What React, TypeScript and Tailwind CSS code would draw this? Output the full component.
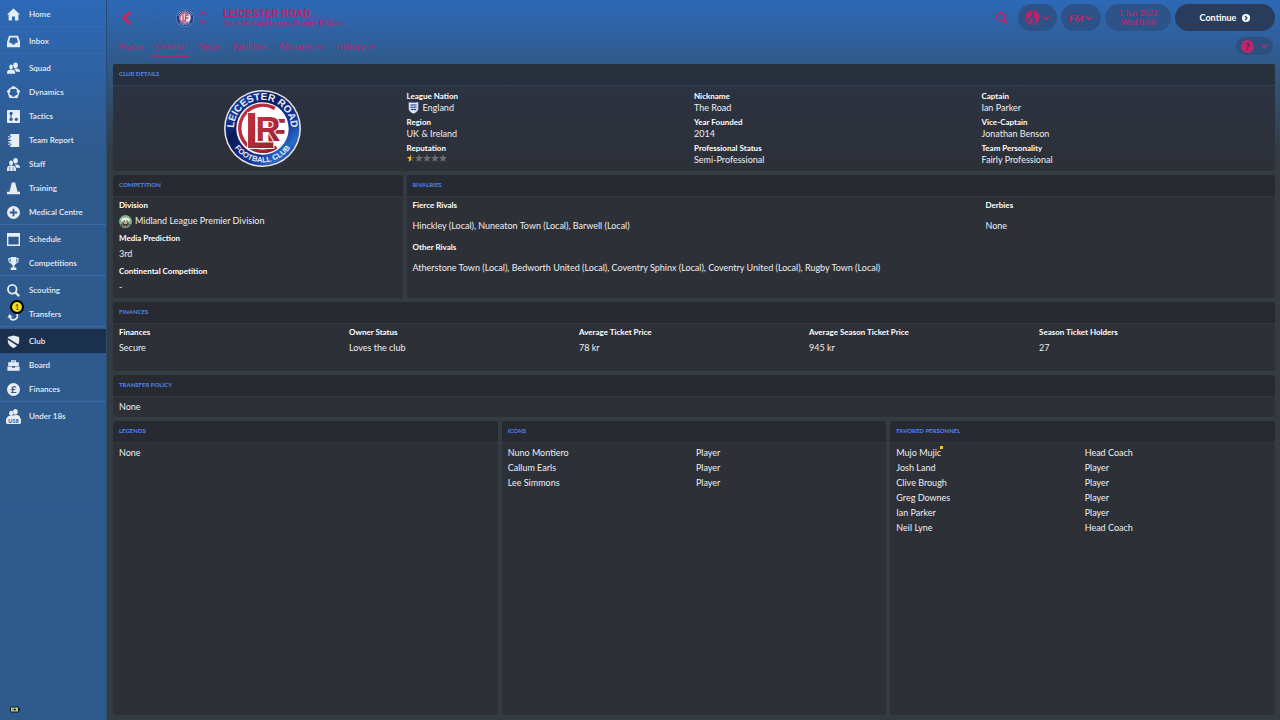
import React from "react";
import clsx from "clsx";

type IconProperties = {
  className?: string;
  children?: React.ReactNode;
};

const Glyph: React.FC<IconProperties> = ({ className, children }) => (
  <svg
    viewBox="0 0 16 16"
    fill="currentColor"
    aria-hidden="true"
    className={className || "size-[13px] shrink-0"}
  >
    {children}
  </svg>
);

const HomeIcon = () => (
  <Glyph>
    <path d="M8 0.5 16 8h-2v7.5H9.8v-5H6.2v5H2V8H0l8-7.5z" />
  </Glyph>
);

const InboxIcon = () => (
  <Glyph>
    <path
      fillRule="evenodd"
      d="M2.5 1h11L16 8.5V15H0V8.500L2.500 1zm1.600 2.200L2.600 8.500v1h2.600l1.300 2.300h3l1.300-2.300h2.600v-1l-1.500-5.300H4.100z"
    />
  </Glyph>
);

const SquadIcon = () => (
  <Glyph>
    <ellipse cx="10.500" cy="4" rx="2.800" ry="3.500" />
    <ellipse cx="5" cy="6" rx="2.300" ry="2.900" />
    <path d="M8.500 8.300 12.300 8c2.200.8 3.700 1.500 3.700 3.200V12h-5c-.3-1.700-1.200-2.600-2.500-3.700z" />
    <path d="M0 12.800c0-2.300 2-3.500 5-3.500s5 1.200 5 3.500v1.700H0v-1.700z" />
  </Glyph>
);

const DynamicsIcon = () => (
  <Glyph>
    <circle cx="8" cy="8" r="6.200" fill="none" stroke="currentColor" strokeWidth="1.800" />
    <circle cx="8" cy="2" r="2" />
    <circle cx="13.900" cy="6.500" r="2" />
    <circle cx="11.700" cy="13" r="2" />
    <circle cx="4.300" cy="13" r="2" />
    <circle cx="2.100" cy="6.500" r="2" />
  </Glyph>
);

const TacticsIcon = () => (
  <Glyph>
    <rect width="16" height="16" rx="1" />
    <g fill="#2f5f9c">
      <circle cx="5" cy="4.300" r="2" />
      <circle cx="5" cy="11.500" r="2" />
      <circle cx="11.500" cy="11.500" r="2" />
      <rect x="4.300" y="5.500" width="1.400" height="5" />
    </g>
  </Glyph>
);

const ReportIcon = () => (
  <Glyph>
    <path d="M4 0h11v16H4v-2.500H1.500V12H4v-1.500H1.500V9H4V7H1.500V5.500H4V4H1.500V2.500H4V0z" />
    <path d="M5.500 3.200H3M5.500 8H3M5.500 12.800H3" stroke="#2f5f9c" strokeWidth="1" />
  </Glyph>
);

const StaffIcon = () => (
  <Glyph>
    <ellipse cx="10.500" cy="3.500" rx="2.800" ry="3.400" />
    <ellipse cx="5" cy="6" rx="2.400" ry="2.900" />
    <path d="M9 8h3.500c2 .7 3.500 1.500 3.500 3.200V12h-4.500C11 10 10 9 9 8z" />
    <path d="M0 13.500c0-3 2-4.200 5-4.200s6 1.200 6 4.200V16H0v-2.500z" />
    <path d="M3.300 11v5M7.500 11v5" stroke="#2f5b92" strokeWidth="0.800" />
  </Glyph>
);

const TrainingIcon = () => (
  <Glyph>
    <path d="M6 0.500h4l3 11.500h3v3H0v-3h3L6 0.500z" />
  </Glyph>
);

const MedicalIcon = () => (
  <Glyph>
    <path
      fillRule="evenodd"
      d="M8 0a8 8 0 1 1 0 16A8 8 0 0 1 8 0zM6.900 3.500v3.400H3.500v2.200h3.400v3.400h2.200V9.100h3.400V6.900H9.100V3.500H6.900z"
    />
  </Glyph>
);

const ScheduleIcon = () => (
  <Glyph>
    <path fillRule="evenodd" d="M0 0h16v16H0V0zm1.700 4.500v9.800h12.600V4.500H1.700z" />
  </Glyph>
);

const TrophyIcon = () => (
  <Glyph>
    <path d="M4.500 0h7v5c0 3-1.200 4.800-2.500 5.500V13h2.500v3h-7v-3H7v-2.500C5.700 9.800 4.500 8 4.500 5V0z" />
    <path
      d="M4.500 2H2.200c0 3 .8 5 3.300 5.500M11.500 2h2.300c0 3-.8 5-3.300 5.500"
      fill="none"
      stroke="currentColor"
      strokeWidth="1.300"
    />
  </Glyph>
);

const SearchIcon: React.FC<IconProperties> = ({ className }) => (
  <Glyph className={className}>
    <circle cx="6.500" cy="6.500" r="5.300" fill="none" stroke="currentColor" strokeWidth="2.200" />
    <path d="M10.500 10.500 15 15" stroke="currentColor" strokeWidth="2.800" />
  </Glyph>
);

const TransfersIcon = () => (
  <Glyph>
    <path
      d="M12.500 7c1.500 4.500-1 7.500-4.500 7.500-2.500 0-4-1.500-4.500-3.500"
      fill="none"
      stroke="currentColor"
      strokeWidth="2.200"
    />
    <path d="M0.500 12 3 7.500l4 3.500-6.500 1z" />
  </Glyph>
);

const ClubIcon = () => (
  <Glyph>
    <path d="M1 2.500 8 0.500l7 2v5c0 4-3 7-7 8.500-4-1.500-7-4.500-7-8.500v-5z" />
    <path d="M0.500 4.500 14 13" stroke="#1b304d" strokeWidth="2" />
  </Glyph>
);

const BoardIcon = () => (
  <Glyph>
    <path
      fillRule="evenodd"
      d="M5 1.500h6V4h3.500v4.500h-13V4H5V1.500zM6.500 3v1h3V3h-3z"
    />
    <path d="M0.500 9.300h5.800v1.500h3.400V9.300h5.800v5.200H0.500V9.300z" />
  </Glyph>
);

const FinancesIcon = () => (
  <Glyph>
    <circle cx="8" cy="8" r="8" />
    <text
      x="8"
      y="12.500"
      textAnchor="middle"
      fontSize="12"
      fontWeight="900"
      fontFamily="Lato, sans-serif"
      fill="#2f5a8d"
    >
      £
    </text>
  </Glyph>
);

const UnderIcon = () => (
  <svg viewBox="0 0 16 16" fill="currentColor" aria-hidden="true" className="-mx-px size-[15px] shrink-0">
    <ellipse cx="10" cy="3" rx="2.500" ry="3" />
    <ellipse cx="5.500" cy="4.500" rx="2.200" ry="2.600" />
    <path d="M1 10c0-2 2-3 4.500-3L12 6.500c2 .5 3 1.500 3 3.500H1z" />
    <rect y="9.500" width="16" height="6.500" rx="1.500" />
    <text
      x="8"
      y="15"
      textAnchor="middle"
      fontSize="6"
      fontWeight="900"
      fontFamily="Lato, sans-serif"
      fill="#2f5a8d"
    >
      U18
    </text>
  </svg>
);

type NavItem = {
  label: string;
  icon: React.FC;
  badge?: string;
};

const navGroups: NavItem[][] = [
  [{ label: "Home", icon: HomeIcon }],
  [{ label: "Inbox", icon: InboxIcon }],
  [
    { label: "Squad", icon: SquadIcon },
    { label: "Dynamics", icon: DynamicsIcon },
    { label: "Tactics", icon: TacticsIcon },
    { label: "Team Report", icon: ReportIcon },
    { label: "Staff", icon: StaffIcon },
    { label: "Training", icon: TrainingIcon },
    { label: "Medical Centre", icon: MedicalIcon },
  ],
  [
    { label: "Schedule", icon: ScheduleIcon },
    { label: "Competitions", icon: TrophyIcon },
  ],
  [
    { label: "Scouting", icon: SearchIcon },
    { label: "Transfers", icon: TransfersIcon, badge: "1" },
  ],
  [
    { label: "Club", icon: ClubIcon },
    { label: "Board", icon: BoardIcon },
    { label: "Finances", icon: FinancesIcon },
  ],
  [{ label: "Under 18s", icon: UnderIcon }],
];

const Sidebar = () => (
  <nav className="flex w-[106px] shrink-0 flex-col bg-[#2f5a8d] bg-linear-to-b from-[#2d69b8] from-0% to-[#2f5a8d] to-[150px] pt-0.5">
    {navGroups.map((group, index) => (
      <ul
        key={group[0].label}
        className={clsx(index > 0 && "border-t border-[#3a6ba6] pt-0.5")}
      >
        {group.map(({ label, icon: Icon, badge }) => (
          <li key={label}>
            <a
              href="#"
              aria-current={label === "Club" ? "page" : undefined}
              className={clsx(
                "relative flex h-6 items-center gap-[9px] pl-[7px] text-[8px] font-semibold text-[#e6edf6]",
                label === "Club" && "bg-[#1b304d]"
              )}
            >
              <Icon />
              {label}
              {badge && (
                <span className="absolute -top-0.5 left-[10px] flex size-[14px] items-center justify-center rounded-full border-2 border-black bg-[#f0dc1e] text-[7px] leading-none text-[#4d480f]">
                  {badge}
                </span>
              )}
            </a>
          </li>
        ))}
      </ul>
    ))}
    <svg viewBox="0 0 10 6" aria-hidden="true" className="mt-auto mb-[7px] ml-[10px] h-[7px] w-[10px]">
      <rect x="0.500" y="0.500" width="8" height="5" rx="0.500" fill="#c5cf8a" stroke="#11161c" />
      <rect x="8.500" y="2" width="1.500" height="2" fill="#11161c" />
      <path d="M2 3h3M4.500 2 6 3 4.500 4z" fill="#11161c" stroke="#11161c" strokeWidth="0.500" />
    </svg>
  </nav>
);

const SmallCrest = () => (
  <svg viewBox="0 0 18 18" role="img" aria-label="Leicester Road" className="ml-[10px] size-[18px]">
    <circle cx="9" cy="9" r="9" fill="#8fa3cf" />
    <circle cx="9" cy="9" r="8.500" fill="#1d3a8c" />
    <path d="M2.500 6.500a7 7 0 0 1 13 0M4 13.500a7 7 0 0 0 10 0" fill="none" stroke="#9db0dc" strokeWidth="1.500" strokeDasharray="1 0.700" />
    <circle cx="9" cy="9" r="5.800" fill="#efe3ea" />
    <path d="M12 5a5 5 0 1 0 0 8" fill="none" stroke="#c04a62" strokeWidth="1.200" />
    <path d="M7 5.500v6.500h3M9.500 12V6h3M9.500 9h3" fill="none" stroke="#c04a62" strokeWidth="1.300" />
  </svg>
);

const Crest = () => (
  <svg viewBox="0 0 100 100" role="img" aria-label="Club crest" className="mt-1 size-[77px] justify-self-center">
    <defs>
      <linearGradient id="crest-blue" x1="0" y1="0" x2="1" y2="1">
        <stop offset="0" stopColor="#0b1f6b" />
        <stop offset="0.200" stopColor="#16389a" />
        <stop offset="0.350" stopColor="#0c1a55" />
        <stop offset="0.650" stopColor="#15369a" />
        <stop offset="0.800" stopColor="#2a6cc4" />
        <stop offset="1" stopColor="#0c1f66" />
      </linearGradient>
      <linearGradient id="crest-red" x1="0" y1="0" x2="1" y2="1">
        <stop offset="0" stopColor="#c4333f" />
        <stop offset="0.500" stopColor="#b02a38" />
        <stop offset="1" stopColor="#8f1f2e" />
      </linearGradient>
      <path id="crest-top" d="M13 50a37 37 0 0 1 74 0" />
      <path id="crest-bottom" d="M6 50a44 44 0 0 0 88 0" />
    </defs>
    <circle cx="50" cy="50" r="50" fill="#e9e4e2" />
    <circle cx="50" cy="50" r="48" fill="url(#crest-blue)" />
    <circle cx="50" cy="50" r="34" fill="#fff" />
    <g fill="#e8edf8" fontFamily="'Liberation Sans', sans-serif" fontWeight="700" textAnchor="middle">
      <text fontSize="13">
        <textPath href="#crest-top" startOffset="50%">
          LEICESTER ROAD
        </textPath>
      </text>
      <text fontSize="10">
        <textPath href="#crest-bottom" startOffset="50%">
          FOOTBALL CLUB
        </textPath>
      </text>
    </g>
    <path
      d="M66 24A30 30 0 1 0 68 74"
      fill="none"
      stroke="url(#crest-red)"
      strokeWidth="4.500"
    />
    <g
      fill="url(#crest-red)"
      stroke="#fff"
      strokeWidth="2.500"
      paintOrder="stroke"
      fontFamily="'Liberation Sans', sans-serif"
      fontWeight="700"
    >
      <text x="55" y="68" fontSize="42">
        F
      </text>
      <text x="27" y="75" fontSize="64">
        L
      </text>
      <text x="41" y="66" fontSize="45">
        R
      </text>
    </g>
  </svg>
);

const Chevron: React.FC<{ className?: string }> = ({ className }) => (
  <svg
    viewBox="0 0 8 8"
    fill="none"
    stroke="currentColor"
    strokeWidth="1.400"
    aria-hidden="true"
    className={clsx("size-[8px]", className)}
  >
    <path d="m1 2.500 3 3 3-3" />
  </svg>
);

const tabs = [
  { label: "Profile" },
  { label: "General", active: true },
  { label: "News" },
  { label: "Facilities" },
  { label: "Affiliates", menu: true },
  { label: "History", menu: true },
];

const Header = () => (
  <header className="pb-[7px] text-[#b8266b]">
    <div className="flex h-[35px] items-center">
      <button aria-label="Back" className="ml-[8px] text-[#d0245a]">
        <svg viewBox="0 0 10 14" fill="none" stroke="currentColor" strokeWidth="3" className="h-[14px] w-[11px]">
          <path d="M8.500 1 2.500 7l6 6" />
        </svg>
      </button>
      <button aria-label="Forward" className="ml-[23px] text-[#33629f]">
        <svg viewBox="0 0 10 14" fill="none" stroke="currentColor" strokeWidth="2" className="h-[14px] w-[11px]">
          <path d="m2 1 6 6-6 6" />
        </svg>
      </button>
      <SmallCrest />
      <div className="ml-[5px] flex flex-col gap-px">
        <button aria-label="Previous club">
          <Chevron className="rotate-180" />
        </button>
        <button aria-label="Next club">
          <Chevron />
        </button>
      </div>
      <div className="ml-4">
        <h1 className="font-['Roboto',sans-serif] text-[11px] leading-[11px] font-bold">LEICESTER ROAD</h1>
        <p className="text-[7px] leading-[9px] font-bold text-[#a82c76]">
          1st in Midland League Premier Division
        </p>
      </div>

      <div className="ml-auto flex items-center gap-1">
        <button aria-label="Search" className="mr-1.5 text-[#c02465]">
          <SearchIcon className="size-[12px]" />
        </button>
        <button
          aria-label="World"
          className="flex h-[27px] w-[39px] items-center justify-center gap-0.5 rounded-full bg-[#2c5288] text-[#c02465]"
        >
          <svg viewBox="0 0 16 16" className="size-[15px]">
            <circle cx="8" cy="8" r="7" fill="none" stroke="currentColor" strokeWidth="1.500" />
            <path
              d="M2 5c1-2 3-3.500 5-3.500l1 2-1.500 1L7 6 5 7.500 6 9l2 .5.500 2L7 14.500 5 12l-.5-3L2 7.500V5zM9.500 2l3 1.500L14 7l-1 4-1.500 1L10.500 9 9 7.500l1-1.500-.5-4z"
              fill="currentColor"
            />
          </svg>
          <Chevron />
        </button>
        <button
          aria-label="FM menu"
          className="flex h-[27px] w-[40px] items-center justify-center gap-0.5 rounded-full bg-[#2c5288] text-[#c02465]"
        >
          <span className="text-[10px] leading-none font-black italic">FM</span>
          <Chevron />
        </button>
        <button className="h-[27px] w-[66px] rounded-full bg-[#2e5388] text-[8px] leading-[9px] text-[#b3296f]">
          <span className="block font-bold">1 Jun 2022</span>
          <span className="block font-bold">Wed 0:00</span>
        </button>
        <button className="flex h-[27px] w-[100px] items-center justify-center gap-1.5 rounded-full bg-[#293c5c] text-[9px] font-bold text-white">
          Continue
          <svg viewBox="0 0 16 16" className="size-[8px]">
            <circle cx="8" cy="8" r="8" fill="currentColor" />
            <path d="m6 4 4 4-4 4" fill="none" stroke="#293c5c" strokeWidth="2.500" />
          </svg>
        </button>
      </div>
    </div>

    <div className="flex h-[22px] items-center justify-between">
      <nav className="flex h-full gap-1 pl-px text-[9px] text-[#b52a70]">
        {tabs.map((tab) => (
          <a
            key={tab.label}
            href="#"
            className={clsx(
              "flex items-center gap-[3px] border-b-2 px-1 pt-[3px]",
              tab.active ? "border-[#9c3078]" : "border-transparent"
            )}
          >
            {tab.label}
            {tab.menu && <Chevron />}
          </a>
        ))}
      </nav>
      <button
        aria-label="Help"
        className="mr-0.5 flex h-[18px] w-[37px] items-center justify-center gap-1.5 rounded-full bg-[#2e5080] text-[#b52a70]"
      >
        <span className="flex size-[13px] items-center justify-center rounded-full bg-[#c02469] text-[9px] leading-none font-black text-[#3c2c5c]">
          ?
        </span>
        <Chevron />
      </button>
    </div>
  </header>
);

type PanelProperties = {
  title: string;
  className?: string;
  headClassName?: string;
  children: React.ReactNode;
};

const Panel: React.FC<PanelProperties> = ({ title, className, headClassName, children }) => (
  <section className={clsx("overflow-hidden rounded-[3px]", className || "bg-[#2d3037]")}>
    <h2
      className={clsx(
        "h-[22px] border-b px-1.5 text-[6px] leading-5 font-bold text-[#4f86f0]",
        headClassName || "border-[#34383f] bg-[#282a31]"
      )}
    >
      {title}
    </h2>
    {children}
  </section>
);

const EnglandBadge = () => (
  <svg viewBox="0 0 12 14" aria-hidden="true" className="-my-px h-[13px] w-[11px]">
    <path d="M1 1.500h10v7c0 2.500-2.500 4-5 5-2.500-1-5-2.500-5-5v-7z" fill="#e9eef7" stroke="#9fb2d0" strokeWidth="0.600" />
    <path d="M2.500 4.200h7M2.500 6.700h7M3 9.200h6" stroke="#27407e" strokeWidth="1.200" />
    <path d="M4.500 3v8M7.500 3v8" stroke="#5a7cc0" strokeWidth="0.700" />
    <path d="M3 1h6" stroke="#27407e" strokeWidth="1" />
  </svg>
);

const LeagueBadge = () => (
  <svg viewBox="0 0 14 14" aria-hidden="true" className="size-[13px]">
    <circle cx="7" cy="7" r="7" fill="#7fb298" />
    <path d="M2 5c2-3 8-3 10 0l-1 2H3L2 5z" fill="#ece6d2" />
    <path d="M3 8h8l-1.500 4.500h-5L3 8z" fill="#6b4c33" />
    <path d="M5 6.500h1.500M8 6.500h1.500M5 9.500h4M2 10l1.500 1.500M12 10l-1.500 1.500" stroke="#20251f" strokeWidth="1.200" />
    <path d="M5.500 8h3v1.500h-3z" fill="#f1ead9" />
  </svg>
);

const starPath = "M5 0.300 6.400 3.600 10 3.900 7.300 6.200 8.100 9.700 5 7.800 1.900 9.700 2.700 6.200 0 3.900 3.600 3.600z";

const Reputation = () => (
  <span role="img" aria-label="Half a star out of five" className="flex h-[11px]">
    {[0, 1, 2, 3, 4].map((star) => (
      <svg key={star} viewBox="0 0 10 10" className="size-[8px]">
        <path d={starPath} fill={star === 0 ? "#4b4d50" : "#6c6e72"} />
        {star === 0 && <path d="M5 0.300V7.800L1.900 9.700 2.700 6.200 0 3.900 3.600 3.600z" fill="#f2bd1d" />}
      </svg>
    ))}
  </span>
);

type Detail = {
  label: string;
  value: React.ReactNode;
};

const clubDetails: Detail[][] = [
  [
    {
      label: "League Nation",
      value: (
        <span className="flex items-center gap-1 pl-px">
          <EnglandBadge />
          England
        </span>
      ),
    },
    { label: "Region", value: "UK & Ireland" },
    { label: "Reputation", value: <Reputation /> },
  ],
  [
    { label: "Nickname", value: "The Road" },
    { label: "Year Founded", value: "2014" },
    { label: "Professional Status", value: "Semi-Professional" },
  ],
  [
    { label: "Captain", value: "Ian Parker" },
    { label: "Vice-Captain", value: "Jonathan Benson" },
    { label: "Team Personality", value: "Fairly Professional" },
  ],
];

const competition: Detail[] = [
  {
    label: "Division",
    value: (
      <span className="flex items-center gap-[3px]">
        <LeagueBadge />
        Midland League Premier Division
      </span>
    ),
  },
  { label: "Media Prediction", value: "3rd" },
  { label: "Continental Competition", value: "-" },
];

const rivals: Detail[] = [
  { label: "Fierce Rivals", value: "Hinckley (Local), Nuneaton Town (Local), Barwell (Local)" },
  {
    label: "Other Rivals",
    value:
      "Atherstone Town (Local), Bedworth United (Local), Coventry Sphinx (Local), Coventry United (Local), Rugby Town (Local)",
  },
];

const finances: Detail[] = [
  { label: "Finances", value: "Secure" },
  { label: "Owner Status", value: "Loves the club" },
  { label: "Average Ticket Price", value: "78 kr" },
  { label: "Average Season Ticket Price", value: "945 kr" },
  { label: "Season Ticket Holders", value: "27" },
];

const icons = [
  ["Nuno Montiero", "Player"],
  ["Callum Earls", "Player"],
  ["Lee Simmons", "Player"],
];

const personnel = [
  ["Mujo Mujic", "Head Coach"],
  ["Josh Land", "Player"],
  ["Clive Brough", "Player"],
  ["Greg Downes", "Player"],
  ["Ian Parker", "Player"],
  ["Neil Lyne", "Head Coach"],
];

const Term: React.FC<Detail> = ({ label, value }) => (
  <>
    <dt className="text-[8px] font-bold text-white">{label}</dt>
    <dd>{value}</dd>
  </>
);

const PeopleTable: React.FC<{ rows: string[][]; starred?: string }> = ({ rows, starred }) => (
  <div className="px-1.5 pt-0.5">
    <table className="w-full table-fixed">
      <tbody>
        {rows.map(([name, role]) => (
          <tr key={name} className="leading-[15px]">
            <td className="p-0">
              <span className="relative">
                {name}
                {name === starred && (
                  <span className="absolute -top-px -right-0.5 size-[3px] bg-[#f2c81d]" />
                )}
              </span>
            </td>
            <td className="p-0 pl-0.5">{role}</td>
          </tr>
        ))}
      </tbody>
    </table>
  </div>
);

const App = () => (
  <div className="flex min-h-screen bg-[#333c43] font-['Lato',sans-serif] text-[9px] text-[#eeeff1]">
    <Sidebar />
    <main className="flex min-w-0 flex-1 flex-col gap-1 border-l border-[#2b4a70] bg-linear-to-b from-[#2d69b8] from-0% via-[#305a8c] via-[62px] to-[#333c43] to-[150px] pr-[5px] pb-[5px] pl-[6px]">
      <div>
        <Header />
        <Panel
          title="CLUB DETAILS"
          className="bg-linear-to-b from-[#2b3344] to-[#2d3037]"
          headClassName="border-[#32405a] bg-[#28303d]"
        >
          <div className="grid grid-cols-4 px-1.5">
            <Crest />
            {clubDetails.map((column) => (
              <dl key={column[0].label} className="flex flex-col gap-1 pt-[5px] pb-1.5 leading-[11px]">
                {column.map((detail) => (
                  <div key={detail.label}>
                    <Term {...detail} />
                  </div>
                ))}
              </dl>
            ))}
          </div>
        </Panel>
      </div>

      <div className="grid grid-cols-[1fr_3fr] gap-1">
        <Panel title="COMPETITION">
          <dl className="flex flex-col gap-px px-1.5 pb-[3px] leading-4">
            {competition.map((detail) => (
              <div key={detail.label}>
                <Term {...detail} />
              </div>
            ))}
          </dl>
        </Panel>
        <Panel title="RIVALRIES">
          <div className="grid grid-cols-[2fr_1fr] gap-1.5 px-1.5 leading-4">
            <dl className="flex flex-col gap-[5px]">
              {rivals.map((detail) => (
                <Term key={detail.label} {...detail} />
              ))}
            </dl>
            <dl className="flex flex-col gap-[5px]">
              <Term label="Derbies" value="None" />
            </dl>
          </div>
        </Panel>
      </div>

      <Panel title="FINANCES">
        <dl className="grid grid-cols-5 px-1.5 pb-[15px] leading-4">
          {finances.map((detail) => (
            <div key={detail.label}>
              <Term {...detail} />
            </div>
          ))}
        </dl>
      </Panel>

      <Panel title="TRANSFER POLICY">
        <p className="px-1.5 leading-5">None</p>
      </Panel>

      <div className="grid flex-1 grid-cols-3 gap-1">
        <Panel title="LEGENDS">
          <p className="px-1.5 leading-5">None</p>
        </Panel>
        <Panel title="ICONS">
          <PeopleTable rows={icons} />
        </Panel>
        <Panel title="FAVORED PERSONNEL">
          <PeopleTable rows={personnel} starred="Mujo Mujic" />
        </Panel>
      </div>
    </main>
  </div>
);

export default App;
